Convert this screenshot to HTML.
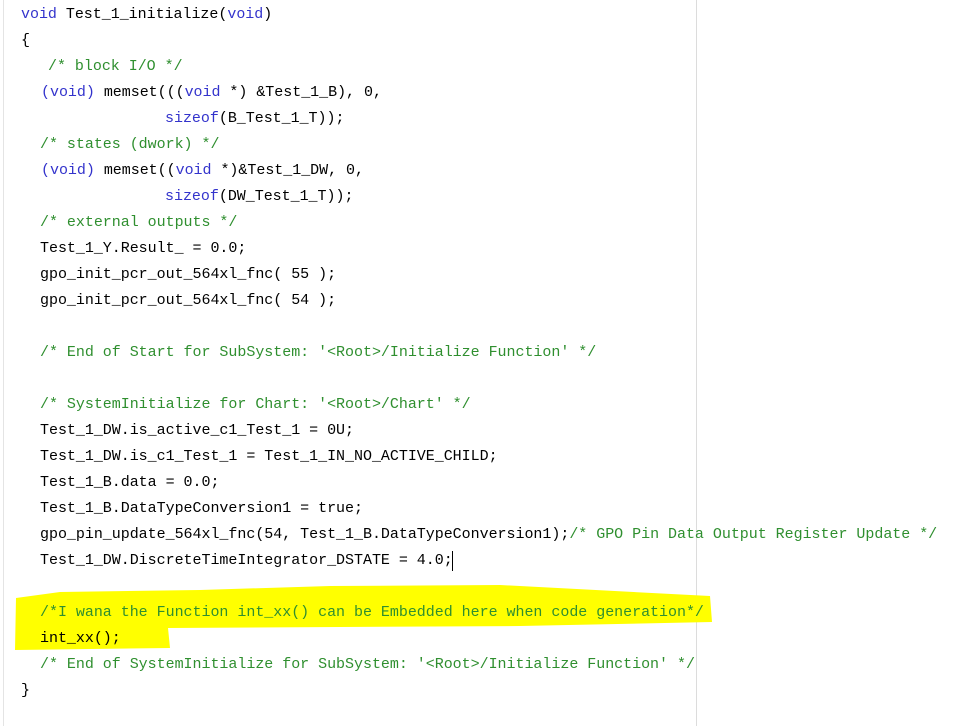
<!DOCTYPE html>
<html><head><meta charset="utf-8"><style>
html,body{margin:0;padding:0;width:970px;height:726px;background:#fff;overflow:hidden;position:relative}
.l{position:absolute;white-space:pre;font-family:"Liberation Mono","Noto Sans CJK SC",monospace;font-size:15px;letter-spacing:-0.03px;line-height:20px;color:#000;margin-top:1px}
.k{color:#3333cc}.c{color:#2f8f2f}
</style></head><body>
<div style="position:absolute;left:3px;top:0;width:1px;height:726px;background:#e4e4e4"></div>
<div style="position:absolute;left:696px;top:0;width:1px;height:726px;background:#dcdcdc"></div>
<svg style="position:absolute;left:0;top:0" width="970" height="726"><path d="M16 598 L60 592 L200 590 L330 586 L500 585 L710 596 L712 622 L520 626 L168 628 L170 648 L15 650 Z" fill="#ffff00"/></svg>
<div style="position:absolute;left:452px;top:551px;width:1px;height:20px;background:#000"></div>
<div class="l" style="left:21px;top:4px"><span class="k">void</span> Test_1_initialize(<span class="k">void</span>)</div>
<div class="l" style="left:21px;top:30px">{</div>
<div class="l c" style="left:48px;top:56px">/* block I/O */</div>
<div class="l" style="left:41px;top:82px"><span class="k">(void)</span> memset(((<span class="k">void</span> *) &amp;Test_1_B), 0,</div>
<div class="l" style="left:165px;top:108px"><span class="k">sizeof</span>(B_Test_1_T));</div>
<div class="l c" style="left:40px;top:134px">/* states (dwork) */</div>
<div class="l" style="left:41px;top:160px"><span class="k">(void)</span> memset((<span class="k">void</span> *)&amp;Test_1_DW, 0,</div>
<div class="l" style="left:165px;top:186px"><span class="k">sizeof</span>(DW_Test_1_T));</div>
<div class="l c" style="left:40px;top:212px">/* external outputs */</div>
<div class="l" style="left:40px;top:238px">Test_1_Y.Result_ = 0.0;</div>
<div class="l" style="left:40px;top:264px">gpo_init_pcr_out_564xl_fnc( 55 );</div>
<div class="l" style="left:40px;top:290px">gpo_init_pcr_out_564xl_fnc( 54 );</div>
<div class="l c" style="left:40px;top:342px">/* End of Start for SubSystem: '&lt;Root&gt;/Initialize Function' */</div>
<div class="l c" style="left:40px;top:394px">/* SystemInitialize for Chart: '&lt;Root&gt;/Chart' */</div>
<div class="l" style="left:40px;top:420px">Test_1_DW.is_active_c1_Test_1 = 0U;</div>
<div class="l" style="left:40px;top:446px">Test_1_DW.is_c1_Test_1 = Test_1_IN_NO_ACTIVE_CHILD;</div>
<div class="l" style="left:40px;top:472px">Test_1_B.data = 0.0;</div>
<div class="l" style="left:40px;top:498px">Test_1_B.DataTypeConversion1 = true;</div>
<div class="l" style="left:40px;top:524px">gpo_pin_update_564xl_fnc(54, Test_1_B.DataTypeConversion1);<span class="c">/* GPO Pin Data Output Register Update */</span></div>
<div class="l" style="left:40px;top:550px">Test_1_DW.DiscreteTimeIntegrator_DSTATE = 4.0;</div>
<div class="l c" style="left:40px;top:602px">/*I wana the Function int_xx() can be Embedded here when code generation*/</div>
<div class="l" style="left:40px;top:628px">int_xx();</div>
<div class="l c" style="left:40px;top:654px">/* End of SystemInitialize for SubSystem: '&lt;Root&gt;/Initialize Function' */</div>
<div class="l" style="left:21px;top:680px">}</div>
</body></html>
